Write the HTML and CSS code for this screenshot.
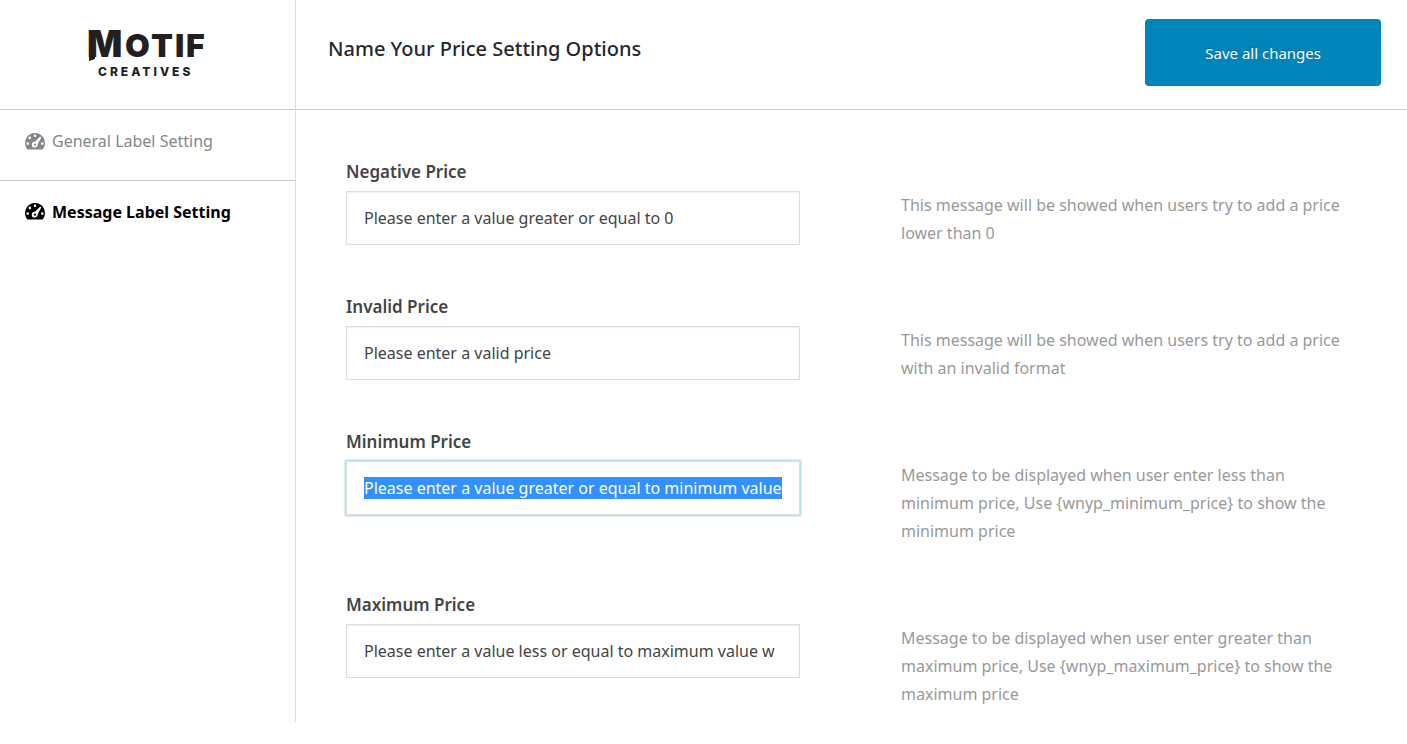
FILE: index.html
```html
<!DOCTYPE html>
<html lang="en">
<head>
    <meta charset="UTF-8">
    <meta name="viewport" content="width=device-width, initial-scale=1.0">
    <title>Name Your Price Setting Options</title>
    <link rel="stylesheet" href="styles.css">
</head>
<body>
    <svg class="sprite" aria-hidden="true">
        <symbol id="gauge" viewBox="0 0 20 17">
            <path fill-rule="evenodd" d="M10 0a10 10 0 0 1 8.700 14.900L17.500 16.500H2.500L1.300 14.900A10 10 0 0 1 10 0zM10 1.500a1.300 1.300 0 1 0 0 2.600a1.300 1.300 0 1 0 0-2.600zM4.800 3.600a1.300 1.300 0 1 0 0 2.600a1.300 1.300 0 1 0 0-2.600zM2.700 9.300a1.300 1.300 0 1 0 0 2.600a1.300 1.300 0 1 0 0-2.600zM17.300 9.300a1.300 1.300 0 1 0 0 2.600a1.300 1.300 0 1 0 0-2.600zM15.200 3.600L10 8.800A2.900 2.900 0 1 0 12.600 11.200L16.300 4.500z"/>
            <circle cx="10" cy="11.700" r="1.100"/>
        </symbol>
    </svg>

    <div class="panel">
        <aside class="sidebar">
            <a class="logo" href="#">
                <svg viewBox="0 0 120 52" role="img" aria-label="Motif Creatives">
                    <!-- foot that lengthens the left stem of the M -->
                    <path d="M1 27h6v4l-6 2z"/>
                    <text class="logo-name" y="29"><tspan class="logo-initial" x="-1">M</tspan><tspan x="37 63 87 98">OTIF</tspan></text>
                    <text class="logo-sub" x="10" y="48">CREATIVES</text>
                </svg>
            </a>
            <nav>
                <a class="tab" href="#general"><svg class="icon"><use href="#gauge"/></svg>General Label Setting</a>
                <a class="tab active" href="#message"><svg class="icon"><use href="#gauge"/></svg>Message Label Setting</a>
            </nav>
        </aside>

        <main class="content">
            <header class="header">
                <h1>Name Your Price Setting Options</h1>
                <button type="submit" form="messages" class="save">Save all changes</button>
            </header>

            <form id="messages" class="fields">
                <div class="field">
                    <label for="negative">Negative Price</label>
                    <input type="text" id="negative" value="Please enter a value greater or equal to 0">
                    <p>This message will be showed when users try to add a price lower than 0</p>
                </div>
                <div class="field">
                    <label for="invalid">Invalid Price</label>
                    <input type="text" id="invalid" value="Please enter a valid price">
                    <p>This message will be showed when users try to add a price with an invalid format</p>
                </div>
                <div class="field">
                    <label for="minimum">Minimum Price</label>
                    <input type="text" id="minimum" value="Please enter a value greater or equal to minimum value">
                    <p>Message to be displayed when user enter less than minimum price, Use {wnyp_minimum_price} to show the minimum price</p>
                </div>
                <div class="field">
                    <label for="maximum">Maximum Price</label>
                    <input type="text" id="maximum" value="Please enter a value less or equal to maximum value w">
                    <p>Message to be displayed when user enter greater than maximum price, Use {wnyp_maximum_price} to show the maximum price</p>
                </div>
            </form>
        </main>
    </div>

    <script>
        const minimum = document.getElementById('minimum');
        minimum.focus();
        minimum.select();
        minimum.scrollLeft = 0;
    </script>
</body>
</html>
```

FILE: styles.css
```css
* {
    box-sizing: border-box;
}

body {
    margin: 0;
    background: #fff;
    color: #444;
    font-family: "Segoe UI", "Noto Sans", sans-serif;
    font-size: 16px;
    line-height: 28px;
}

.sprite {
    display: none;
}

.panel {
    display: flex;
}

/* Sidebar */
.sidebar {
    width: 296px;
    flex-shrink: 0;
    border-right: 1px solid #ddd;
}

.logo {
    display: flex;
    justify-content: center;
    height: 110px;
    padding-top: 28px;
    border-bottom: 1px solid #ccc;
}

.logo svg {
    width: 120px;
    height: 52px;
    fill: #231f20;
    overflow: visible;
}

.logo-name {
    font: 900 32px Inter, sans-serif;
}

.logo-initial {
    font-size: 37px;
}

.logo-sub {
    font: 800 12px Inter, sans-serif;
    letter-spacing: 3px;
}

.tab {
    display: flex;
    align-items: center;
    gap: 7px;
    height: 70px;
    padding: 0 25px 8px;
    color: #82878c;
    text-decoration: none;
}

.tab + .tab {
    border-top: 1px solid #ccc;
}

.tab.active {
    color: #000;
    font-weight: 700;
}

.icon {
    width: 20px;
    height: 17px;
    fill: currentColor;
}

/* Content */
.content {
    flex: 1;
}

.header {
    display: flex;
    justify-content: space-between;
    align-items: flex-start;
    height: 110px;
    padding: 19px 26px 0 32px;
    border-bottom: 1px solid #ccc;
}

.header h1 {
    margin: 16px 0 0;
    color: #23282d;
    font-size: 20px;
    font-weight: 500;
}

.save {
    height: 67px;
    padding: 0 60px;
    border: 0;
    border-radius: 4px;
    background: #0085ba;
    color: #fff;
    font: inherit;
    font-size: 15px;
    text-shadow: 0 -1px 1px #006799;
}

.fields {
    padding: 48px 52px 14px 50px;
}

.field {
    display: grid;
    grid-template-columns: 1fr 1fr;
    column-gap: 101px;
    margin-bottom: 46px;
}

.field:last-child {
    margin-bottom: 0;
}

.field label {
    grid-column: 1 / 3;
    height: 33px;
    font-size: 17px;
    font-weight: 600;
}

.field input {
    width: 100%;
    height: 54px;
    padding: 0 17px;
    border: 1px solid #ddd;
    background: #fff;
    box-shadow: inset 0 1px 2px rgba(0, 0, 0, 0.07);
    color: #444;
    font: inherit;
}

.field input:focus {
    outline: 0;
    box-shadow: 0 0 2px 1px #9bd0e8;
}

.field input::selection {
    background: #3390ff;
    color: #fff;
}

.field p {
    margin: 0;
    color: #999;
}
```
